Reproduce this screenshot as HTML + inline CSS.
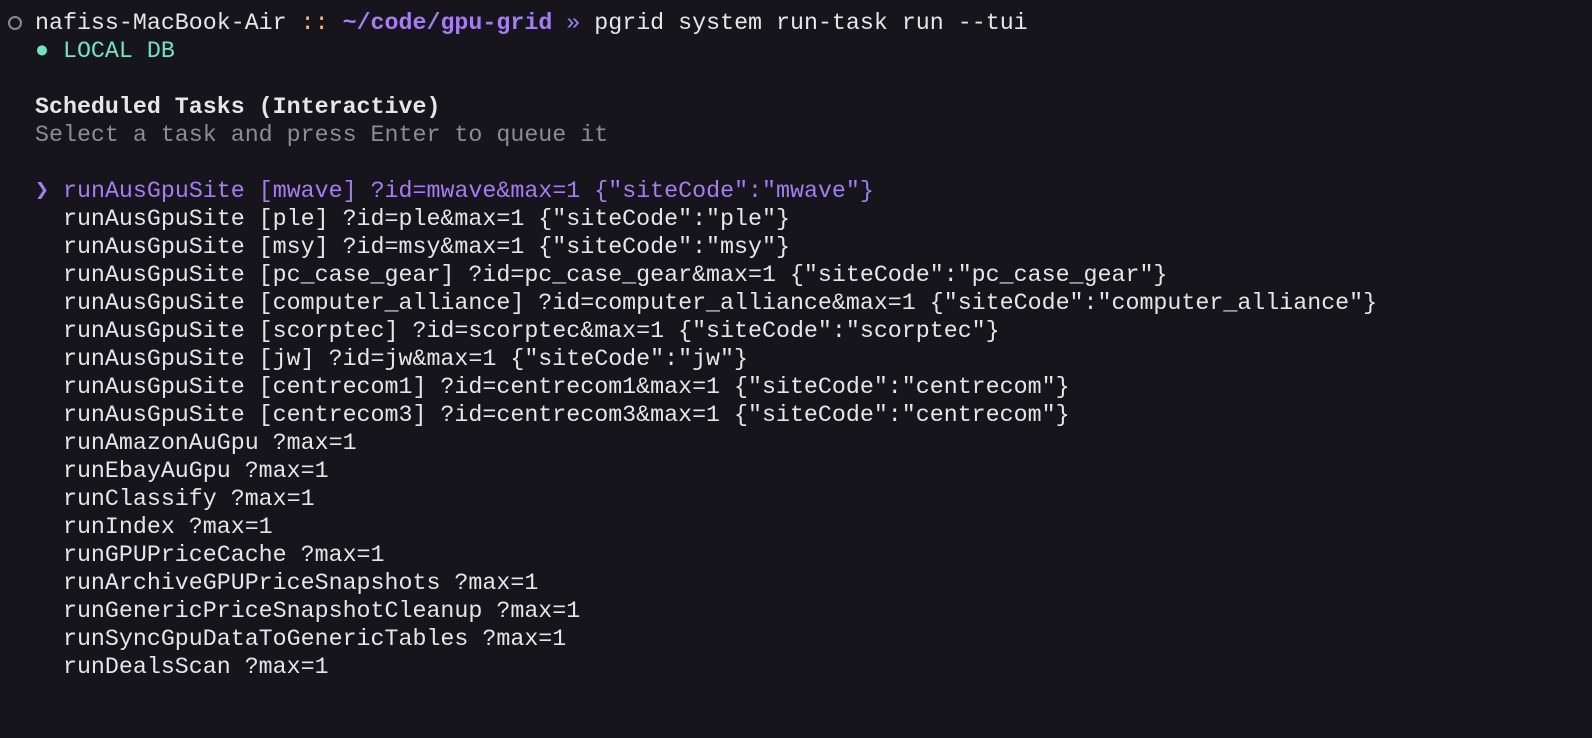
<!DOCTYPE html>
<html><head><meta charset="utf-8"><style>
html,body{margin:0;padding:0;background:#16151b;width:1592px;height:738px;overflow:hidden}
pre{margin:0;position:absolute;left:35px;top:8.5px;font-family:"Liberation Mono","DejaVu Sans Mono",monospace;font-size:23.3px;line-height:28px;color:#e6e6e8;white-space:pre}
.o{color:#f2bf78}.p{color:#a57cf2;font-weight:bold}.pu{color:#a57cf2}.g{color:#6fe6c1}.b{font-weight:bold;color:#e6e6e8}.d{color:#8d8c92}
.ring{position:absolute;left:8px;top:16px;width:10px;height:10px;border:2px solid #8a8a8e;border-radius:50%}
</style></head><body>
<div class="ring"></div>
<pre>nafiss-MacBook-Air <span class="o">::</span> <span class="p">~/code/gpu-grid</span> <span class="pu">»</span> pgrid system run-task run --tui
<span class="g">● LOCAL DB</span>

<span class="b">Scheduled Tasks (Interactive)</span>
<span class="d">Select a task and press Enter to queue it</span>

<span class="pu">❯ runAusGpuSite [mwave] ?id=mwave&amp;max=1 {"siteCode":"mwave"}</span>
  runAusGpuSite [ple] ?id=ple&amp;max=1 {"siteCode":"ple"}
  runAusGpuSite [msy] ?id=msy&amp;max=1 {"siteCode":"msy"}
  runAusGpuSite [pc_case_gear] ?id=pc_case_gear&amp;max=1 {"siteCode":"pc_case_gear"}
  runAusGpuSite [computer_alliance] ?id=computer_alliance&amp;max=1 {"siteCode":"computer_alliance"}
  runAusGpuSite [scorptec] ?id=scorptec&amp;max=1 {"siteCode":"scorptec"}
  runAusGpuSite [jw] ?id=jw&amp;max=1 {"siteCode":"jw"}
  runAusGpuSite [centrecom1] ?id=centrecom1&amp;max=1 {"siteCode":"centrecom"}
  runAusGpuSite [centrecom3] ?id=centrecom3&amp;max=1 {"siteCode":"centrecom"}
  runAmazonAuGpu ?max=1
  runEbayAuGpu ?max=1
  runClassify ?max=1
  runIndex ?max=1
  runGPUPriceCache ?max=1
  runArchiveGPUPriceSnapshots ?max=1
  runGenericPriceSnapshotCleanup ?max=1
  runSyncGpuDataToGenericTables ?max=1
  runDealsScan ?max=1</pre>
</body></html>
